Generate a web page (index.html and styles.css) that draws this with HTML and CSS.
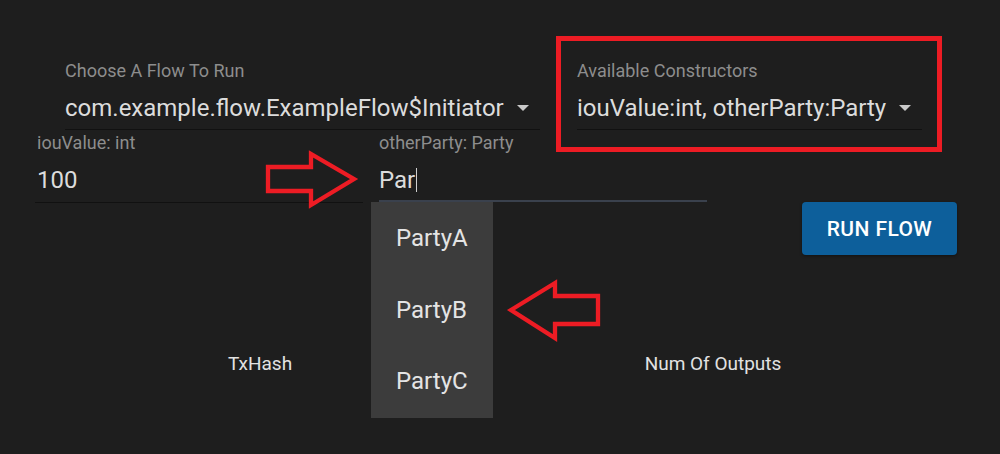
FILE: index.html
```html
<!DOCTYPE html>
<html lang="en">
<head>
<meta charset="utf-8">
<title>Run Flow</title>
<link rel="stylesheet" href="styles.css">
</head>
<body>
<div class="page">
  <div class="row row-top">
    <div class="field field-flow">
      <span class="label">Choose A Flow To Run</span>
      <div class="value select">
        <span>com.example.flow.ExampleFlow$Initiator</span>
        <svg class="caret" width="12" height="6" viewBox="0 0 12 6"><path d="M0 0H12L6 6Z"/></svg>
      </div>
    </div>
    <div class="field field-ctor">
      <span class="label">Available Constructors</span>
      <div class="value select">
        <span>iouValue:int, otherParty:Party</span>
        <svg class="caret" width="12" height="6" viewBox="0 0 12 6"><path d="M0 0H12L6 6Z"/></svg>
      </div>
    </div>
  </div>

  <div class="row row-params">
    <div class="field field-param">
      <span class="label">iouValue: int</span>
      <div class="value">100</div>
    </div>
    <div class="field field-param focused">
      <span class="label">otherParty: Party</span>
      <div class="value">Par<span class="cursor"></span></div>
      <ul class="menu">
        <li>PartyA</li>
        <li>PartyB</li>
        <li>PartyC</li>
      </ul>
    </div>
  </div>

  <div class="row row-action">
    <button class="run-btn">RUN FLOW</button>
  </div>

  <div class="table-head">
    <div class="th">TxHash</div>
    <div class="th">Num Of Outputs</div>
  </div>

  <div class="highlight-box"></div>
  <svg class="annotations" width="1000" height="454" viewBox="0 0 1000 454">
    <polygon points="268,167 311,167 311,154 354,179 311,205 311,191 268,191"/>
    <polygon points="511,310 555,283 555,296 598,296 598,324 555,324 555,338"/>
  </svg>
</div>
</body>
</html>
```

FILE: styles.css
```css
html, body {
  margin: 0;
  padding: 0;
  background: #1e1e1e;
}

body {
  font-family: Roboto, "Noto Sans", "Liberation Sans", sans-serif;
  color: #dedede;
  width: 1000px;
  height: 454px;
  overflow: hidden;
}

.page {
  position: relative;
  width: 1000px;
  height: 454px;
}

.row {
  display: flex;
  align-items: flex-start;
}

.row-top {
  padding-top: 60px;
  padding-left: 65px;
  gap: 37px;
}

.field {
  display: flex;
  flex-direction: column;
  position: relative;
}

.label {
  font-size: 18px;
  line-height: 22px;
  color: #8d8d8d;
}

.value {
  margin-top: 11px;
  font-size: 24px;
  line-height: 30px;
  color: #dcdcdc;
  padding-bottom: 6px;
  border-bottom: 1px solid #111111;
  display: flex;
  align-items: center;
}

.select {
  justify-content: space-between;
}

.caret {
  margin-right: 11px;
  fill: #c9c9c9;
}

.field-flow {
  width: 475px;
}

.field-ctor {
  width: 345px;
}

.row-params {
  padding-top: 2px;
  padding-left: 35px;
  gap: 16px;
}

.field-param {
  width: 328px;
}

.field-param .label {
  padding-left: 2px;
}

.field-param .value {
  padding-left: 2px;
  padding-bottom: 7px;
}

.focused .label,
.focused .value {
  padding-left: 0;
}

.focused .value {
  padding-bottom: 5px;
  border-bottom: 2px solid #3a414d;
}

.cursor {
  display: inline-block;
  width: 1px;
  height: 24px;
  margin-left: 1px;
  background: #cfcfcf;
}

.menu {
  position: absolute;
  left: -8px;
  top: 100%;
  margin: 0;
  padding: 1px 0 0;
  list-style: none;
  width: 122px;
  background: #3c3c3c;
  z-index: 2;
}

.menu li {
  height: 71.5px;
  line-height: 71.5px;
  padding-left: 25px;
  font-size: 24px;
  color: #e4e4e4;
}

.row-action {
  justify-content: flex-end;
  padding-right: 43px;
  margin-top: -1px;
}

.run-btn {
  width: 155px;
  height: 53px;
  border: none;
  border-radius: 4px;
  background: #0d5f9b;
  color: #ffffff;
  font-family: Roboto, "Noto Sans", sans-serif;
  font-size: 21px;
  font-weight: 500;
  letter-spacing: 0.4px;
  padding: 0;
  box-shadow: 0 1px 3px rgba(0, 0, 0, 0.4);
}

.table-head {
  display: grid;
  grid-template-columns: 450px 456px;
  margin-left: 35px;
  margin-top: 97px;
}

.th {
  text-align: center;
  font-size: 19px;
  line-height: 24px;
  font-weight: 400;
  color: #e2e2e2;
}

.highlight-box {
  position: absolute;
  left: 556px;
  top: 36px;
  width: 376px;
  height: 106px;
  border: 5px solid #ed1c24;
  pointer-events: none;
}

.annotations {
  position: absolute;
  left: 0;
  top: 0;
  pointer-events: none;
  z-index: 3;
}

.annotations polygon {
  fill: none;
  stroke: #ed1c24;
  stroke-width: 4.3;
  stroke-linejoin: miter;
}
```
